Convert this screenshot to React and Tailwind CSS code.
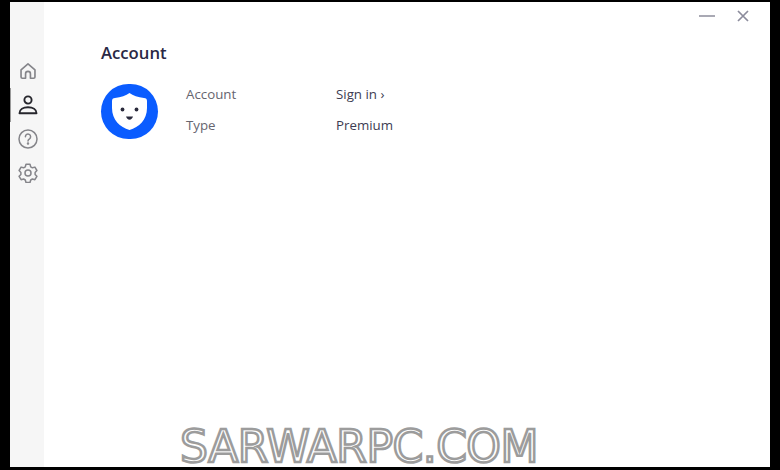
import React from 'react';

const rows = [
  { label: 'Account', value: 'Sign in ›' },
  { label: 'Type', value: 'Premium' },
];

function HomeIcon() {
  return (
    <svg width="20" height="20" viewBox="-1.500 -1.500 23 23" fill="none" stroke="#85858a" strokeWidth="1.900" strokeLinejoin="round" strokeLinecap="round">
      <path d="M2 8.600 10 1.800l8 6.800v8.200a1.500 1.500 0 0 1-1.500 1.500h-3.700v-5a2.800 2.800 0 0 0-5.600 0v5H3.500A1.500 1.500 0 0 1 2 16.800z" />
    </svg>
  );
}

function UserIcon() {
  return (
    <svg width="20" height="20" viewBox="0 0 20 20" fill="none" stroke="#26262c" strokeWidth="1.900" strokeLinejoin="round">
      <circle cx="10" cy="5" r="3.600" />
      <path d="M1.500 18.300c0-3.900 3.800-6 8.500-6s8.500 2.100 8.500 6z" />
    </svg>
  );
}

function HelpIcon() {
  return (
    <svg width="20" height="20" viewBox="0 0 20 20" fill="none" stroke="#85858a" strokeWidth="1.500" strokeLinecap="round">
      <circle cx="10" cy="10" r="9" />
      <path d="M7.400 7.700a2.600 2.600 0 1 1 4.100 2.100c-.9.600-1.500 1.100-1.500 2.100" />
      <circle cx="10" cy="14.400" r=".5" fill="#85858a" />
    </svg>
  );
}

function GearIcon() {
  return (
    <svg width="20" height="20" viewBox="0 0 20 20" fill="none" stroke="#85858a" strokeWidth="1.500" strokeLinejoin="round">
      <path d="M8 1.300h4l.7 2.500 1.700 1 2.500-.7 2 3.400-1.800 1.900v2l1.800 1.900-2 3.400-2.500-.7-1.700 1-.7 2.500H8l-.7-2.500-1.700-1-2.500.7-2-3.400 1.800-1.900v-2L1.100 7.500l2-3.400 2.500.7 1.700-1z" />
      <circle cx="10" cy="10" r="3" />
    </svg>
  );
}

function Logo() {
  return (
    <div className="w-[57px] h-[55px] rounded-full bg-[#0a5cff] flex items-center justify-center shrink-0">
      <svg width="35" height="37" viewBox="0 0 35 37">
        <path d="M17.500 0C21 2.500 26 4.500 32 5c2 .2 3 1 3 3v7c0 12-8 19-17.500 22C8 34 0 27 0 15V8c0-2 1-2.800 3-3 6-.5 11-2.500 14.500-5z" fill="#fff" />
        <circle cx="10.500" cy="16.500" r="1.900" fill="#2a2a3c" />
        <circle cx="24.500" cy="16.500" r="1.900" fill="#2a2a3c" />
        <path d="M14 23.500h7c-.5 2-2 3.200-3.500 3.200S14.500 25.500 14 23.500z" fill="#2a2a3c" />
      </svg>
    </div>
  );
}

export default function App() {
  return (
    <div className="relative w-[780px] h-[470px] bg-black pl-[10px] pr-[10px] pt-[2px] pb-[3px] overflow-hidden font-['Open_Sans','Noto_Sans',sans-serif]">
      <div className="flex h-full bg-white">
        {/* Sidebar */}
        <div className="relative w-[34px] bg-[#f6f6f6] flex flex-col items-center pt-[59px] pl-[2px] gap-[14px] shrink-0">
          <div className="absolute left-0 top-[86px] w-[1px] h-[34px] bg-[#9a9a9a]" />
          <HomeIcon />
          <UserIcon />
          <HelpIcon />
          <GearIcon />
        </div>

        {/* Main */}
        <div className="flex-1 flex flex-col">
          <div className="flex justify-end items-center gap-[22px] pr-[21px] h-[28px]">
            <div className="w-[16px] h-[2px] bg-[#a9a9b4]" />
            <svg width="12" height="12" viewBox="0 0 12 12" stroke="#8c8c9c" strokeWidth="1.700">
              <path d="M1 1l10 10M11 1 1 11" />
            </svg>
          </div>

          <div className="pl-[57px] pt-[11px]">
            <h1 className="text-[16.700px] leading-[24px] font-semibold text-[#2a2845]">Account</h1>
            <div className="flex items-start mt-[19px]">
              <Logo />
              <div className="ml-[28px] flex flex-col gap-[10px] text-[13.300px] leading-[21px]">
                {rows.map((row) => (
                  <div className="flex" key={row.label}>
                    <span className="w-[150px] text-[#66656f]">{row.label}</span>
                    <span className="text-[#3d3c52]">{row.value}</span>
                  </div>
                ))}
              </div>
            </div>
          </div>
        </div>
      </div>

      {/* Watermark */}
      <div className="absolute left-[180px] top-[424px] text-[44px] leading-[46px] tracking-[-0.500px] text-white font-['DejaVu_Sans',sans-serif] [-webkit-text-stroke:2.500px_#9c9c9c]">
        SARWARPC.COM
      </div>
    </div>
  );
}
